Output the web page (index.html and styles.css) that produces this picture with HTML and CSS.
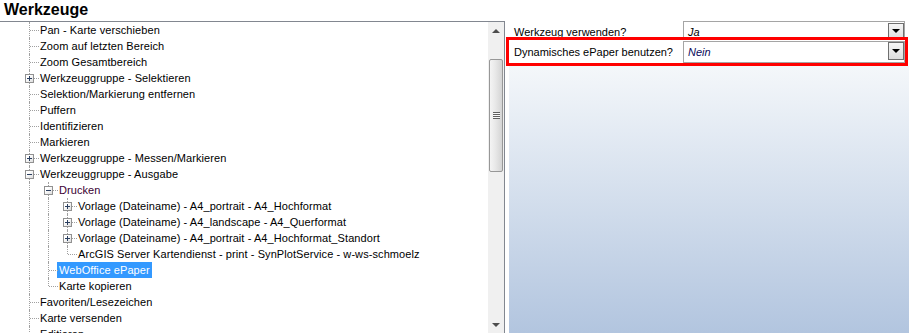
FILE: index.html
```html
<!DOCTYPE html>
<html lang="de">
<head>
<meta charset="utf-8">
<title>Werkzeuge</title>
<link rel="stylesheet" href="styles.css">
</head>
<body>
<div class="title">Werkzeuge</div>
<div class="main">
  <div class="tree">
    <div class="tree-body">
      <div class="row"><span class="node"></span><span class="lbl">Pan - Karte verschieben</span></div>
      <div class="row"><span class="node"></span><span class="lbl">Zoom auf letzten Bereich</span></div>
      <div class="row"><span class="node"></span><span class="lbl">Zoom Gesamtbereich</span></div>
      <div class="row"><span class="node"><span class="box plus"></span></span><span class="lbl">Werkzeuggruppe - Selektieren</span></div>
      <div class="row"><span class="node"></span><span class="lbl">Selektion/Markierung entfernen</span></div>
      <div class="row"><span class="node"></span><span class="lbl">Puffern</span></div>
      <div class="row"><span class="node"></span><span class="lbl">Identifizieren</span></div>
      <div class="row"><span class="node"></span><span class="lbl">Markieren</span></div>
      <div class="row"><span class="node"><span class="box plus"></span></span><span class="lbl">Werkzeuggruppe - Messen/Markieren</span></div>
      <div class="row"><span class="node"><span class="box minus"></span></span><span class="lbl">Werkzeuggruppe - Ausgabe</span></div>
      <div class="row"><span class="guide"></span><span class="node"><span class="box minus"></span></span><span class="lbl group">Drucken</span></div>
      <div class="row"><span class="guide"></span><span class="guide"></span><span class="node"><span class="box plus"></span></span><span class="lbl">Vorlage (Dateiname) - A4_portrait - A4_Hochformat</span></div>
      <div class="row"><span class="guide"></span><span class="guide"></span><span class="node"><span class="box plus"></span></span><span class="lbl">Vorlage (Dateiname) - A4_landscape - A4_Querformat</span></div>
      <div class="row"><span class="guide"></span><span class="guide"></span><span class="node"><span class="box plus"></span></span><span class="lbl">Vorlage (Dateiname) - A4_portrait - A4_Hochformat_Standort</span></div>
      <div class="row"><span class="guide"></span><span class="guide"></span><span class="node last"></span><span class="lbl">ArcGIS Server Kartendienst - print - SynPlotService - w-ws-schmoelz</span></div>
      <div class="row"><span class="guide"></span><span class="node"></span><span class="lbl selected">WebOffice ePaper</span></div>
      <div class="row"><span class="guide"></span><span class="node last"></span><span class="lbl">Karte kopieren</span></div>
      <div class="row"><span class="node"></span><span class="lbl">Favoriten/Lesezeichen</span></div>
      <div class="row"><span class="node"></span><span class="lbl">Karte versenden</span></div>
      <div class="row"><span class="node"></span><span class="lbl">Editieren</span></div>
    </div>
    <div class="scroll">
      <div class="sbtn"><span class="arr up"></span></div>
      <div class="track">
        <div class="thumb"><span class="grip"></span></div>
      </div>
      <div class="sbtn"><span class="arr down"></span></div>
    </div>
  </div>
  <div class="props">
    <div class="prow first">
      <div class="plabel">Werkzeug verwenden?</div>
      <div class="combo c1"><span class="cval">Ja</span><span class="cbtn"><span class="carr"></span></span></div>
    </div>
    <div class="prow second">
      <div class="plabel">Dynamisches ePaper benutzen?</div>
      <div class="combo c2"><span class="cval navy">Nein</span><span class="cbtn"><span class="carr"></span></span></div>
    </div>
    <div class="pfill"></div>
  </div>
</div>
</body>
</html>
```
FILE: styles.css
```css
body {
  margin: 0;
  width: 909px;
  height: 333px;
  overflow: hidden;
  background: #fff;
  color: #000;
  font-family: "Liberation Sans", Arial, sans-serif;
  font-size: 11px;
}

.title {
  height: 21px;
  padding-left: 4px;
  font-size: 16px;
  font-weight: bold;
  line-height: 19px;
}

.main {
  display: flex;
  height: 312px;
}

.tree {
  width: 504px;
  border-top: 1px solid #828790;
  border-right: 1px solid #828790;
  display: flex;
}

.tree-body {
  width: 488px;
  overflow: hidden;
}

.row {
  display: flex;
  height: 16px;
  padding-left: 20px;
  white-space: nowrap;
}

.guide,
.node {
  position: relative;
  flex: none;
  width: 19px;
  height: 16px;
}

.guide::before,
.node::before {
  content: "";
  position: absolute;
  left: 9px;
  top: 0;
  bottom: 0;
  border-left: 1px dotted #a0a0a0;
}

.node.last::before {
  bottom: 8px;
}

.node::after {
  content: "";
  position: absolute;
  left: 10px;
  top: 8px;
  width: 9px;
  border-top: 1px dotted #a0a0a0;
}

.box {
  position: absolute;
  left: 5px;
  top: 4px;
  width: 7px;
  height: 7px;
  border: 1px solid #919191;
  background: linear-gradient(135deg, #ffffff 30%, #dcdcdc);
  z-index: 1;
}

.box::before {
  content: "";
  position: absolute;
  left: 1px;
  top: 3px;
  width: 5px;
  height: 1px;
  background: #2b3f60;
}

.box.plus::after {
  content: "";
  position: absolute;
  left: 3px;
  top: 1px;
  width: 1px;
  height: 5px;
  background: #2b3f60;
}

.lbl {
  line-height: 16px;
  padding: 0 1px;
  letter-spacing: 0.08px;
}

.lbl.group {
  color: #3a0032;
}

.lbl.selected {
  background: #3399ff;
  color: #fff;
  margin-left: -1px;
  padding: 0 2px 0 2px;
}

.scroll {
  width: 16px;
  background: #f0f0f0;
  display: flex;
  flex-direction: column;
}

.sbtn {
  height: 17px;
  display: flex;
  align-items: center;
  justify-content: center;
}

.arr {
  width: 0;
  height: 0;
  border-left: 4px solid transparent;
  border-right: 4px solid transparent;
}

.arr.up {
  border-bottom: 4px solid #4d4d4d;
}

.arr.down {
  border-top: 4px solid #4d4d4d;
}

.track {
  flex: 1;
  padding: 20px 1px 0 1px;
}

.thumb {
  height: 111px;
  border: 1px solid #979797;
  border-radius: 2px;
  background: linear-gradient(to right, #f4f4f4, #e8e8e8 45%, #d4d4d4);
  display: flex;
  align-items: center;
  justify-content: center;
}

.grip {
  width: 7px;
  height: 7px;
  background: repeating-linear-gradient(to bottom, #5f5f5f 0 1px, #f8f8f8 1px 2px);
}

.props {
  flex: 1;
  margin-left: 4px;
  display: flex;
  flex-direction: column;
}

.prow {
  display: flex;
  margin-right: 4px;
}

.prow.first {
  height: 19px;
}

.prow.second {
  height: 23px;
  outline: 3px solid #ff0000;
}

.plabel {
  width: 169px;
  padding-left: 5px;
  line-height: 16px;
}

.first .plabel {
  padding-top: 3px;
}

.second .plabel {
  padding-top: 4px;
}

.combo {
  flex: 1;
  display: flex;
  border: 1px solid #a5a5a5;
  background: #fff;
}

.combo.c1 {
  height: 17px;
}

.combo.c2 {
  margin-top: 1px;
  height: 20px;
}

.cval {
  flex: 1;
  padding-left: 4px;
  font-style: italic;
  line-height: 16px;
}

.c1 .cval {
  padding-top: 2px;
}

.c2 .cval {
  padding-top: 2px;
}

.cval.navy {
  color: #0a0a5a;
}

.cbtn {
  width: 14px;
  border: 1px solid #6f6f6f;
  background: linear-gradient(to bottom, #f6f6f6, #dedede);
  display: flex;
  align-items: center;
  justify-content: center;
}

.c1 .cbtn {
  margin-top: 1px;
  height: 14px;
}

.c2 .cbtn {
  height: 16px;
}

.carr {
  width: 0;
  height: 0;
  border-left: 4px solid transparent;
  border-right: 4px solid transparent;
  border-top: 4px solid #000;
}

.pfill {
  flex: 1;
  margin-top: 3px;
  background: linear-gradient(to bottom, #f4f7fa, #b2c5df);
}
```
